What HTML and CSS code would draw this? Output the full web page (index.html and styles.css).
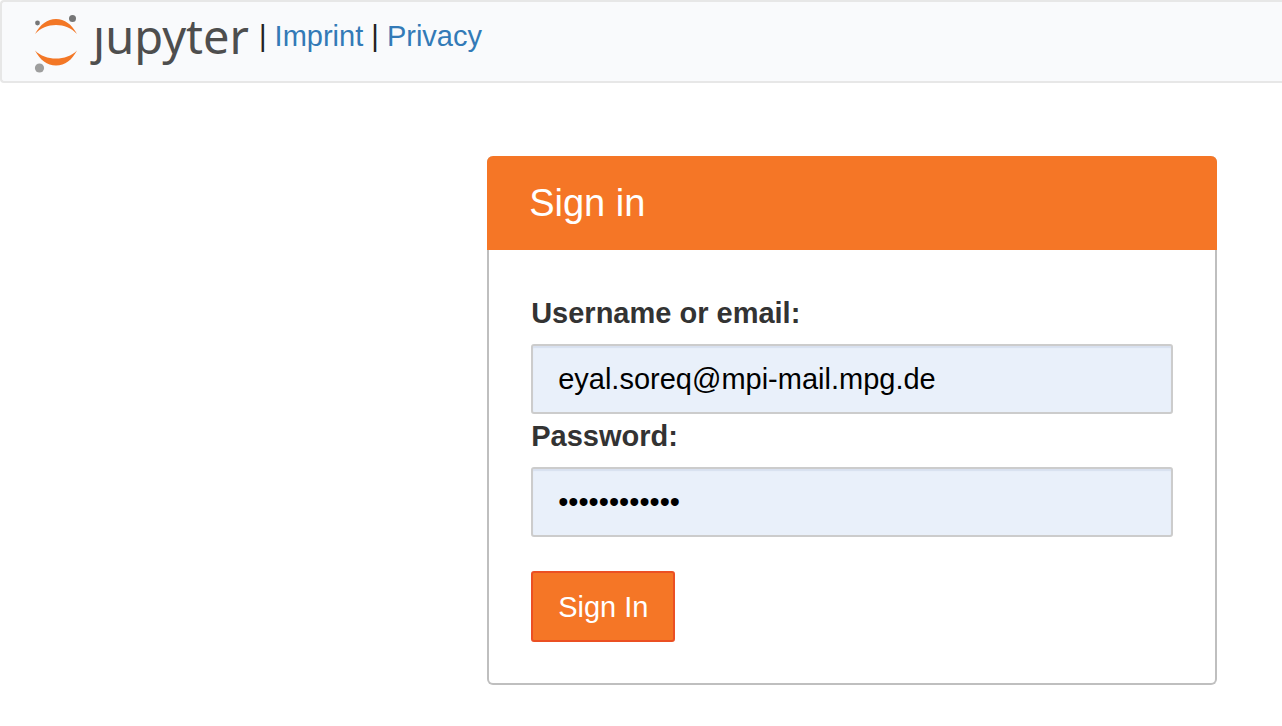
FILE: index.html
```html
<!DOCTYPE html>
<html lang="en">
<head>
<meta charset="utf-8">
<meta name="viewport" content="width=device-width, initial-scale=1">
<title>Sign in - Jupyter</title>
<link rel="stylesheet" href="styles.css">
</head>
<body>
<header class="navbar">
  <div class="brand">
    <svg class="brand-mark" viewBox="0 0 46 60" aria-hidden="true">
      <path class="crescent" d="M2 20C7 10.500 14.500 5 23 5S39 10.500 44 20C38.500 14 31 11 23 11S7.500 14 2 20Z"/>
      <path class="crescent" d="M2 36.500C7.500 42 15 44.500 23 44.500S38.500 42 44 36.500C39 46 32 51.500 23 51.500S7 46 2 36.500Z"/>
      <circle class="moon" cx="4.500" cy="9" r="2.400"/>
      <circle class="moon" cx="39.500" cy="4.500" r="3.500"/>
      <circle class="moon moon-light" cx="6.500" cy="54" r="4.600"/>
    </svg>
    <span class="brand-name">ȷupyter</span>
  </div>
  <nav class="nav-links">| <a href="#imprint">Imprint</a> | <a href="#privacy">Privacy</a></nav>
</header>
<main class="content">
  <form class="panel">
    <h1 class="panel-header">Sign in</h1>
    <div class="panel-body">
      <label class="label" for="username">Username or email:</label>
      <input class="field" id="username" type="text" value="eyal.soreq@mpi-mail.mpg.de">
      <label class="label" for="password">Password:</label>
      <input class="field" id="password" type="password" value="abcdefghijkl">
      <button class="submit" type="submit">Sign In</button>
    </div>
  </form>
</main>
</body>
</html>
```
FILE: styles.css
```css
* {
  box-sizing: border-box;
}

body {
  margin: 0;
  background: #fff;
  color: #333;
  font-family: "Liberation Sans", Arial, sans-serif;
  font-size: 29px;
  line-height: 40px;
}

.navbar {
  display: flex;
  align-items: flex-start;
  gap: 10px;
  padding: 12px 0 7px 31px;
  border: 2px solid #e7e7e7;
  border-right: 0;
  border-radius: 4px 0 0 4px;
  background: #f9fafc;
}

.brand {
  display: flex;
  gap: 14px;
}

.brand-mark {
  width: 46px;
  height: 60px;
}

.crescent {
  fill: #f37726;
}

.moon {
  fill: #767677;
}

.moon-light {
  fill: #9e9e9e;
}

.brand-name {
  color: #4e4e4e;
  font-family: "Noto Sans", "Open Sans", sans-serif;
  font-size: 47px;
  line-height: 44px;
}

.nav-links {
  padding-top: 2px;
  color: #222;
}

.nav-links a {
  color: #337ab7;
  text-decoration: none;
}

.content {
  padding: 73px 64px 40px 38%;
}

.panel {
  max-width: 730px;
  border: 2px solid #bfbfbf;
  border-top: 0;
  border-radius: 6px;
}

.panel-header {
  margin: 0 -2px;
  padding: 24px 42px;
  border-radius: 6px 6px 0 0;
  background: #f57626;
  color: #fff;
  font-size: 38px;
  font-weight: 400;
  line-height: 46px;
}

.panel-body {
  padding: 43px 42px 41px;
}

.label {
  display: block;
  margin-bottom: 11px;
  font-weight: 700;
}

.field {
  display: block;
  width: 100%;
  height: 70px;
  margin-bottom: 2px;
  padding: 12px 25px;
  border: 2px solid #ccc;
  border-radius: 3px;
  background: #e9f0fa;
  box-shadow: inset 0 2px 1px #d8e0ef;
  color: #000;
  font: inherit;
}

.submit {
  display: block;
  height: 71px;
  margin-top: 34px;
  padding: 0 25px;
  border: 2px solid #eb5023;
  border-radius: 3px;
  background: #f57626;
  color: #fff;
  font: inherit;
}
```
